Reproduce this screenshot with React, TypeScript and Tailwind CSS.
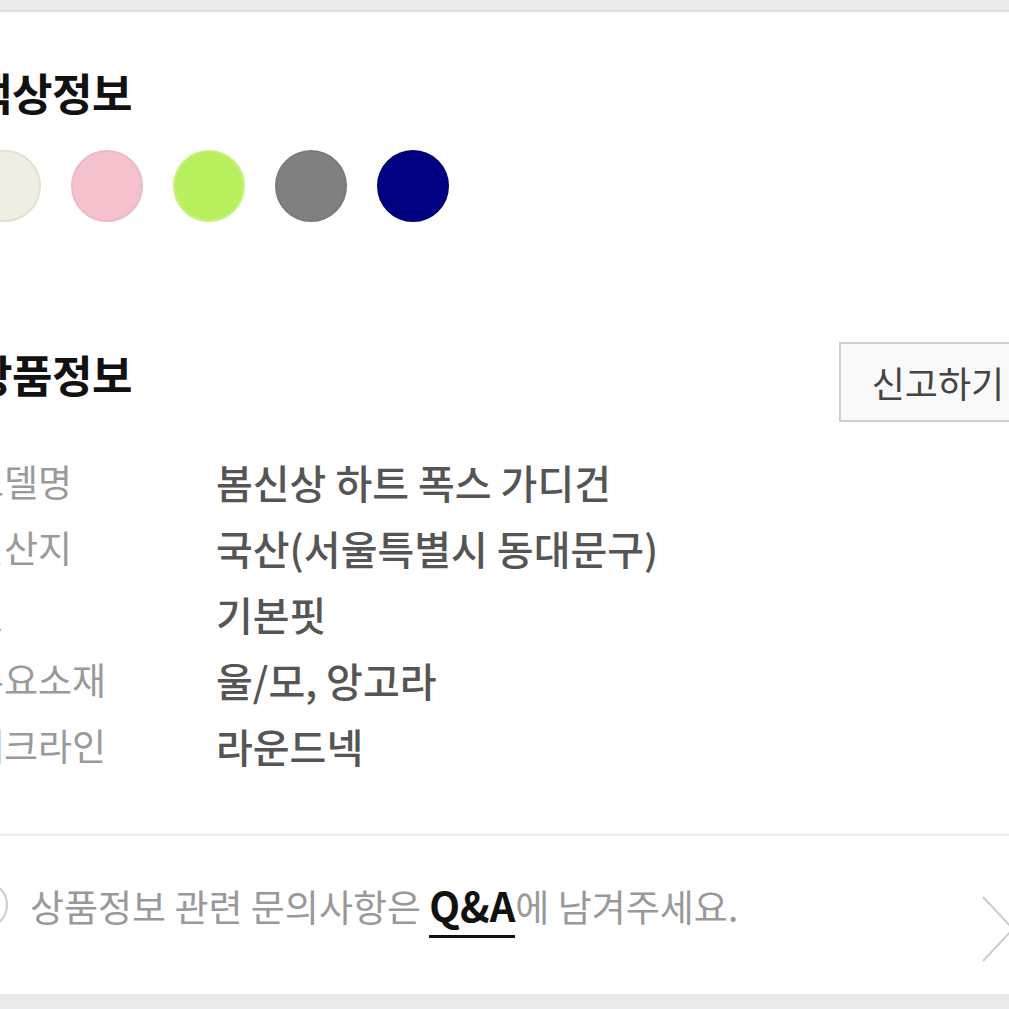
export default function App() {
  const colors = [
    { c: "bg-[#f0eee2] border-[#e2e0d4]" },
    { c: "bg-[#f4c1cd] border-[#ecbac6]" },
    { c: "bg-[#b8f060] border-[#c4f478]" },
    { c: "bg-[#808080] border-[#7a7a7a]" },
    { c: "bg-[#000080] border-[#00007a]" },
  ];
  const rows = [
    ["모델명", "봄신상 하트 폭스 가디건"],
    ["원산지", "국산(서울특별시 동대문구)"],
    ["핏", "기본핏"],
    ["주요소재", "울/모, 앙고라"],
    ["네크라인", "라운드넥"],
  ];
  return (
    <div className="w-[1009px] h-[1009px] bg-white overflow-hidden flex flex-col font-['Noto_Sans_CJK_KR','Noto_Sans',sans-serif]">
      <div className="h-[12px] shrink-0 bg-[#e9eaeb] border-b-2 border-[#dedfe0]" />
      <div className="w-[1065px] -ml-[28px] shrink-0 flex flex-col">
        <h2 className="mt-[56px] h-[48px] leading-[48px] text-[44px] font-bold text-[#111] tracking-[-0.5px]">색상정보</h2>
        <div className="mt-[34px] flex gap-[30px] -ml-[3px]">
          {colors.map((x, i) => (
            <div key={i} className={`w-[72px] h-[72px] rounded-full border-2 ${x.c}`} />
          ))}
        </div>
        <div className="mt-[120px] flex items-start justify-between">
          <h2 className="mt-[8px] h-[48px] leading-[48px] text-[44px] font-bold text-[#111] tracking-[-0.5px]">상품정보</h2>
          <button className="h-[80px] w-[198px] border-2 border-[#d0d0d0] bg-[#f9f9f9] text-[36px] text-[#444] leading-none">
            신고하기
          </button>
        </div>
        <div className="mt-[27px] flex flex-col -ml-[2px]">
          {rows.map(([k, v]) => (
            <div key={k} className="h-[66px] flex items-center">
              <div className="w-[246px] text-[37px] text-[#9a9a9a]">{k}</div>
              <div className="text-[40px] text-[#555] font-medium">{v}</div>
            </div>
          ))}
        </div>
      </div>
      <div className="mt-[55px] h-[2px] shrink-0 bg-[#eeeeee]" />
      <div className="h-[158px] shrink-0 flex items-start justify-between -ml-[40px] w-[1070px]">
        <div className="mt-[45px] flex items-center gap-[22px]">
          <div className="w-[48px] h-[48px] rounded-full border-2 border-[#cccccc]" />
          <div className="text-[37px] leading-[40px] text-[#999]">
            상품정보 관련 문의사항은{" "}
            <span className="text-[#111] text-[40px] font-bold border-b-[3px] border-[#111] pb-[1px]">Q&amp;A</span>
            에 남겨주세요.
          </div>
        </div>
        <svg width="60" height="90" viewBox="0 0 60 90" className="mt-[37px]">
          <path d="M13 24 L43 56 L13 88" stroke="#cccccc" strokeWidth="2" fill="none" />
        </svg>
      </div>
      <div className="flex-1 bg-[#e9eaeb]" />
    </div>
  );
}
